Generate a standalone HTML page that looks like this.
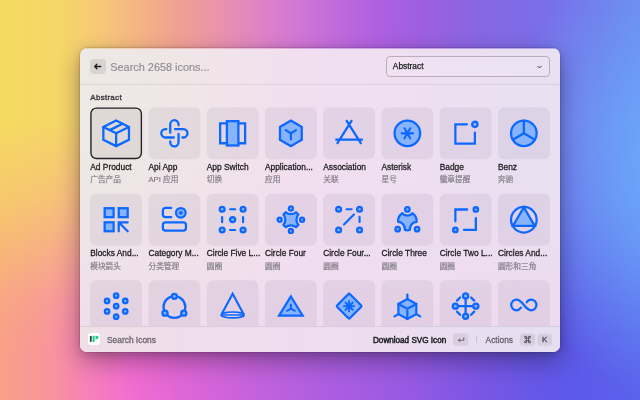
<!DOCTYPE html>
<html lang="en">
<head>
<meta charset="utf-8">
<title>Search Icons</title>
<style>
*{box-sizing:border-box;margin:0;padding:0}
html,body{width:640px;height:400px;overflow:hidden}
body{position:relative;font-family:"Liberation Sans","Noto Sans CJK SC",sans-serif;background:#b060e0}
.bg,.bg2,.bg3{position:absolute;left:0;top:0;width:640px;height:400px}
.bg{background:linear-gradient(to right,#f9a088 0px,#f8949c 50px,#f680ba 90px,#f26ed0 130px,#e066d6 180px,#c662dc 250px,#ae5ee0 320px,#9a5ae2 400px,#7a56e4 480px,#5e58e8 560px,#5a62ec 640px)}
.bg2{background:linear-gradient(to right,#f5da60 0px,#f5d668 60px,#f6c878 100px,#f5b485 140px,#f0a093 180px,#ea92ad 220px,#df83c6 260px,#d076d6 300px,#bf6adc 340px,#ae60e0 380px,#9e5fe0 420px,#8766e2 480px,#7a6ee8 540px,#7278ea 600px,#6e86ee 640px);-webkit-mask-image:linear-gradient(to bottom,#000 0%,#000 30%,rgba(0,0,0,.7) 50%,rgba(0,0,0,.12) 75%,transparent 88%);mask-image:linear-gradient(to bottom,#000 0%,#000 30%,rgba(0,0,0,.7) 50%,rgba(0,0,0,.12) 75%,transparent 88%)}
.bg3{background:radial-gradient(ellipse 165px 235px at 672px 165px,rgba(106,174,252,1),rgba(106,166,249,.64) 45%,rgba(104,160,248,0) 100%)}
.win{position:absolute;left:80px;top:48px;width:480px;height:303.5px;border-radius:7px;overflow:hidden;will-change:transform;
 background:linear-gradient(to top,rgba(240,216,238,.8) 0%,rgba(240,218,239,.4) 30%,rgba(240,220,240,0) 65%),linear-gradient(to right,#ede9e4 0%,#f0e5e8 25%,#f1dff0 46%,#eddff1 72%,#e8e0f1 100%);
 box-shadow:0 9px 24px rgba(0,0,0,.33),0 2px 10px rgba(0,0,0,.14),0 0 0 .5px rgba(0,0,0,.2)}
.win::before{content:"";position:absolute;z-index:5;left:0;top:0;width:480px;height:1px;opacity:.5;background:linear-gradient(to right,#f6c878 0px,#f5b485 60px,#f0a093 100px,#ea92ad 140px,#df83c6 180px,#d076d6 220px,#bf6adc 260px,#ae60e0 300px,#9e5fe0 340px,#8766e2 400px,#7a6ee8 480px)}
.hdr{position:absolute;left:0;top:0;width:480px;height:36.5px;border-bottom:1px solid rgba(0,0,0,.065)}
.back{position:absolute;left:10.2px;top:11px;width:15.4px;height:15.4px;border-radius:4px;background:rgba(0,0,0,.09)}
.back svg{position:absolute;left:3.2px;top:3.2px}
.ph{position:absolute;left:30.3px;top:11.5px;font-size:10.9px;line-height:14px;color:#918b94;-webkit-text-stroke:.15px #918b94;white-space:nowrap}
.dd{position:absolute;left:306px;top:8px;width:164px;height:21px;border:1px solid rgba(60,30,40,.28);border-radius:4.5px;background:rgba(255,255,255,.12)}
.dd span{position:absolute;left:5.8px;top:4.3px;font-size:8.4px;line-height:11px;color:#1d1b1f;-webkit-text-stroke:.25px #1d1b1f;white-space:nowrap}
.dd svg{position:absolute;right:7.5px;top:7.9px}
.sec{position:absolute;left:10.3px;top:44.3px;font-size:8px;line-height:11px;color:#453f47;-webkit-text-stroke:.4px #453f47;letter-spacing:.28px;white-space:nowrap}
.tbg{position:absolute;left:0;top:0}
.tile{position:absolute;width:51.84px;height:51.84px;display:flex;align-items:center;justify-content:center}
.tt{position:absolute;font-size:8.4px;line-height:11px;color:#1d1b1f;-webkit-text-stroke:.26px #1d1b1f;white-space:nowrap}
.st{position:absolute;font-size:7.7px;line-height:11px;color:#837d86;-webkit-text-stroke:.2px #837d86;white-space:nowrap}
.ftr{position:absolute;left:0;top:278px;width:480px;height:25.5px;box-shadow:inset 0 1px 0 rgba(0,0,0,.08);background:linear-gradient(to right,#efe0e6 0%,#f0dcec 25%,#eedcf0 56%,#e6dff2 100%)}
.logo{position:absolute;left:8.2px;top:7.2px;width:12px;height:12px;border-radius:3px;background:#fff}
.logo svg{position:absolute;left:0;top:0}
.ft{position:absolute;top:8.5px;font-size:8.4px;line-height:11px;white-space:nowrap}
.ft.g{color:#69646d;-webkit-text-stroke:.28px #69646d}
.ft.b{color:#1d1b1f;-webkit-text-stroke:.45px #1d1b1f;font-size:8.15px}
.key{position:absolute;top:7.5px;height:12.3px;color:#4a454e;font-size:8px;line-height:12.6px;text-align:center;-webkit-text-stroke:.3px #4a454e}
.key.cmd{font-size:6.6px;line-height:12.3px;-webkit-text-stroke:.4px #4a454e}
.vsep{position:absolute;left:396px;top:10px;width:1px;height:7px;background:rgba(0,0,0,.13)}
</style>
</head>
<body>
<div class="bg"></div><div class="bg2"></div><div class="bg3"></div>
<div class="win">
 <div class="hdr">
  <div class="back"><svg width="9" height="9" viewBox="0 0 16 16" fill="none" stroke="#1d1b1f" stroke-width="2.4" stroke-linecap="round" stroke-linejoin="round"><path d="M13.8 8H3M6.9 4.1L3 8L6.9 11.9"/></svg></div>
  <div class="ph">Search 2658 icons...</div>
  <div class="dd"><span>Abstract</span><svg width="5" height="4.2" viewBox="0 0 12 10" fill="none" stroke="#2a272d" stroke-width="2.2" stroke-linecap="round" stroke-linejoin="round"><path d="M2 3L6 7L10 3"/></svg></div>
 </div>
 <div class="sec">Abstract</div>
<svg class="tbg" width="480" height="304" viewBox="0 0 480 304" fill="rgba(40,20,60,.058)"><rect x="10.24" y="59.41" width="51.84" height="51.84" rx="6" fill="rgba(40,30,30,.07)"/><rect x="10.94" y="60.11" width="50.44" height="50.44" rx="5.5" fill="none" stroke="#26222a" stroke-width="1.4"/><g transform="translate(20.80 69.97) scale(0.6400)" fill="none" stroke="#0d68ff" stroke-width="3.55" stroke-linecap="round" stroke-linejoin="miter"><path d="M44 14L24 4L4 14V34L24 44L44 34V14Z"/><path d="M4 14L24 24L44 14M24 44V24M34 9L14 19"/></g><rect x="68.48" y="59.41" width="51.84" height="51.84" rx="6"/><g transform="translate(79.04 69.97) scale(0.6400)" fill="none" stroke="#0d68ff" stroke-width="3.55" stroke-linecap="round" stroke-linejoin="miter"><path d="M17.5 23V10A6.5 6.5 0 0 1 30.5 10V11.5M25 17.5H38A6.5 6.5 0 0 1 38 30.5H36.5M30.5 25V38A6.5 6.5 0 0 1 17.5 38V36.5M23 30.5H10A6.5 6.5 0 0 1 10 17.5H11.5"/></g><rect x="126.72" y="59.41" width="51.84" height="51.84" rx="6"/><g transform="translate(137.28 69.97) scale(0.6400)" fill="none" stroke="#0d68ff" stroke-width="3.55" stroke-linecap="round" stroke-linejoin="miter"><path d="M15 8.5H4.5V39.5H15M33 8.5H43.5V39.5H33"/><rect x="15" y="5" width="18" height="38" fill="#88b4ff"/></g><rect x="184.96" y="59.41" width="51.84" height="51.84" rx="6"/><g transform="translate(195.52 69.97) scale(0.6400)" fill="none" stroke="#0d68ff" stroke-width="3.55" stroke-linecap="round" stroke-linejoin="miter"><path d="M41 14L24 4L7 14V34L24 44L41 34V14Z" fill="#88b4ff"/><path d="M16 19L24 24L32 19M24 24V33.5"/></g><rect x="243.20" y="59.41" width="51.84" height="51.84" rx="6"/><g transform="translate(253.76 69.97) scale(0.6400)" fill="none" stroke="#0d68ff" stroke-width="3.55" stroke-linecap="round" stroke-linejoin="miter"><g stroke-linecap="butt"><path d="M28.5 3.5L5 40.5M19.5 3.5L43 40.5M2.5 34H45.5"/></g></g><rect x="301.44" y="59.41" width="51.84" height="51.84" rx="6"/><g transform="translate(312.00 69.97) scale(0.6400)" fill="none" stroke="#0d68ff" stroke-width="3.55" stroke-linecap="round" stroke-linejoin="miter"><circle cx="24" cy="24" r="20" fill="#88b4ff"/><path stroke-width="3.3" d="M15 24H33M19.5 16.2L28.5 31.8M28.5 16.2L19.5 31.8"/></g><rect x="359.68" y="59.41" width="51.84" height="51.84" rx="6"/><g transform="translate(370.24 69.97) scale(0.6400)" fill="none" stroke="#0d68ff" stroke-width="3.55" stroke-linecap="round" stroke-linejoin="miter"><path d="M26 10H8V40H38.5V23"/><circle cx="38.5" cy="10" r="4.2" fill="#88b4ff"/></g><rect x="417.92" y="59.41" width="51.84" height="51.84" rx="6"/><g transform="translate(428.48 69.97) scale(0.6400)" fill="none" stroke="#0d68ff" stroke-width="3.55" stroke-linecap="round" stroke-linejoin="miter"><circle cx="24" cy="24" r="20" fill="#88b4ff"/><path d="M24 4V24L6.7 34M24 24L41.3 34"/></g><rect x="10.24" y="145.81" width="51.84" height="51.84" rx="6"/><g transform="translate(20.80 156.37) scale(0.6400)" fill="none" stroke="#0d68ff" stroke-width="3.55" stroke-linecap="round" stroke-linejoin="miter"><rect x="6" y="6" width="14" height="14" fill="#88b4ff"/><rect x="28" y="6" width="14" height="14" fill="#88b4ff"/><rect x="6" y="28" width="14" height="14" fill="#88b4ff"/><path d="M42 28H28V42M28 28L42 42"/></g><rect x="68.48" y="145.81" width="51.84" height="51.84" rx="6"/><g transform="translate(79.04 156.37) scale(0.6400)" fill="none" stroke="#0d68ff" stroke-width="3.55" stroke-linecap="round" stroke-linejoin="miter"><rect x="6" y="28" width="36" height="13" rx="4"/><path d="M19 5.5H10a4 4 0 0 0-4 4V16a4 4 0 0 0 4 4H19"/><circle cx="34" cy="13.2" r="7.5" fill="#88b4ff"/><circle cx="34" cy="13.2" r="3" fill="#0d68ff" stroke="none"/></g><rect x="126.72" y="145.81" width="51.84" height="51.84" rx="6"/><g transform="translate(137.28 156.37) scale(0.6400)" fill="none" stroke="#0d68ff" stroke-width="3.55" stroke-linecap="round" stroke-linejoin="miter"><circle cx="7.6" cy="7.6" r="3.8" fill="#88b4ff"/><circle cx="40.3" cy="7.6" r="3.8" fill="#88b4ff"/><circle cx="7.6" cy="40" r="3.8" fill="#88b4ff"/><circle cx="40.3" cy="40" r="3.8" fill="#88b4ff"/><circle cx="24" cy="23.8" r="4" fill="#88b4ff"/><path stroke-width="3.4" d="M20 7.6H28M20 40H28M7.6 19.8V27.8M40.3 19.8V27.8"/></g><rect x="184.96" y="145.81" width="51.84" height="51.84" rx="6"/><g transform="translate(195.52 156.37) scale(0.6400)" fill="none" stroke="#0d68ff" stroke-width="3.55" stroke-linecap="round" stroke-linejoin="miter"><circle cx="24" cy="6.5" r="3.2" fill="#88b4ff"/><circle cx="41.5" cy="24" r="3.2" fill="#88b4ff"/><circle cx="24" cy="41.5" r="3.2" fill="#88b4ff"/><circle cx="6.5" cy="24" r="3.2" fill="#88b4ff"/><path stroke-linejoin="round" d="M16 12.3A12 12 0 0 0 32 12.3L35.7 16A12 12 0 0 0 35.7 32L32 35.7A12 12 0 0 0 16 35.7L12.3 32A12 12 0 0 0 12.3 16Z" fill="#88b4ff"/></g><rect x="243.20" y="145.81" width="51.84" height="51.84" rx="6"/><g transform="translate(253.76 156.37) scale(0.6400)" fill="none" stroke="#0d68ff" stroke-width="3.55" stroke-linecap="round" stroke-linejoin="miter"><circle cx="7.6" cy="7.6" r="3.8" fill="#88b4ff"/><circle cx="40.3" cy="7.6" r="3.8" fill="#88b4ff"/><circle cx="7.6" cy="40" r="3.8" fill="#88b4ff"/><circle cx="40.3" cy="40" r="3.8" fill="#88b4ff"/><path stroke-width="3.4" d="M20 7.6H28M40.3 19.5V27.5M31.5 15.8L16 31.3"/></g><rect x="301.44" y="145.81" width="51.84" height="51.84" rx="6"/><g transform="translate(312.00 156.37) scale(0.6400)" fill="none" stroke="#0d68ff" stroke-width="3.55" stroke-linecap="round" stroke-linejoin="miter"><path stroke-linejoin="round" d="M16.17 13.80A9.80 9.80 0 0 0 31.83 13.80A14.50 14.50 0 0 1 38.43 27.42A11.30 11.30 0 0 0 27.87 39.97A14.50 14.50 0 0 1 20.13 39.97A11.30 11.30 0 0 0 9.57 27.42A14.50 14.50 0 0 1 16.17 13.80Z" fill="#88b4ff"/><circle cx="24" cy="7.9" r="3.5" fill="#88b4ff"/><circle cx="39.1" cy="38.7" r="3.5" fill="#88b4ff"/><circle cx="8.9" cy="38.7" r="3.5" fill="#88b4ff"/></g><rect x="359.68" y="145.81" width="51.84" height="51.84" rx="6"/><g transform="translate(370.24 156.37) scale(0.6400)" fill="none" stroke="#0d68ff" stroke-width="3.55" stroke-linecap="round" stroke-linejoin="miter"><path d="M26.5 8H8V26.5M21.5 40H40V21.5"/><circle cx="40" cy="8" r="3.5" fill="#88b4ff"/><circle cx="8" cy="40" r="3.5" fill="#88b4ff"/></g><rect x="417.92" y="145.81" width="51.84" height="51.84" rx="6"/><g transform="translate(428.48 156.37) scale(0.6400)" fill="none" stroke="#0d68ff" stroke-width="3.55" stroke-linecap="round" stroke-linejoin="miter"><circle cx="24" cy="24" r="20"/><path d="M24 4.5L7 33.5H41Z" fill="#88b4ff"/></g><rect x="10.24" y="232.21" width="51.84" height="51.84" rx="6"/><g transform="translate(20.80 242.77) scale(0.6400)" fill="none" stroke="#0d68ff" stroke-width="3.55" stroke-linecap="round" stroke-linejoin="miter"><circle cx="24.00" cy="7.60" r="3.5" fill="#88b4ff"/><circle cx="38.20" cy="15.80" r="3.5" fill="#88b4ff"/><circle cx="38.20" cy="32.20" r="3.5" fill="#88b4ff"/><circle cx="24.00" cy="40.40" r="3.5" fill="#88b4ff"/><circle cx="9.80" cy="32.20" r="3.5" fill="#88b4ff"/><circle cx="9.80" cy="15.80" r="3.5" fill="#88b4ff"/><circle cx="24.00" cy="24.00" r="3.5" fill="#88b4ff"/></g><rect x="68.48" y="232.21" width="51.84" height="51.84" rx="6"/><g transform="translate(79.04 242.77) scale(0.6400)" fill="none" stroke="#0d68ff" stroke-width="3.55" stroke-linecap="round" stroke-linejoin="miter"><circle cx="24" cy="25.5" r="17"/><circle cx="24" cy="8.7" r="4" fill="#88b4ff"/><circle cx="9.3" cy="35" r="4" fill="#88b4ff"/><circle cx="38.7" cy="35" r="4" fill="#88b4ff"/></g><rect x="126.72" y="232.21" width="51.84" height="51.84" rx="6"/><g transform="translate(137.28 242.77) scale(0.6400)" fill="none" stroke="#0d68ff" stroke-width="3.55" stroke-linecap="round" stroke-linejoin="miter"><ellipse cx="24" cy="37.75" rx="18" ry="4.6" stroke-width="2.6"/><path stroke-width="3.3" stroke-linecap="butt" d="M6.6 37.2L24 4.8L41.4 37.2"/><path stroke-width="2.4" stroke-linecap="butt" d="M6 37.75H42"/></g><rect x="184.96" y="232.21" width="51.84" height="51.84" rx="6"/><g transform="translate(195.52 242.77) scale(0.6400)" fill="none" stroke="#0d68ff" stroke-width="3.55" stroke-linecap="round" stroke-linejoin="miter"><path d="M24 9L42.4 39H5.6Z" fill="#88b4ff"/><path stroke-width="3.2" d="M24 21.5V28L18 31.3M24 28L30.2 31.3"/></g><rect x="243.20" y="232.21" width="51.84" height="51.84" rx="6"/><g transform="translate(253.76 242.77) scale(0.6400)" fill="none" stroke="#0d68ff" stroke-width="3.55" stroke-linecap="round" stroke-linejoin="miter"><path d="M22.6 5.4a2 2 0 0 1 2.8 0L42.6 22.6a2 2 0 0 1 0 2.8L25.4 42.6a2 2 0 0 1-2.8 0L5.4 25.4a2 2 0 0 1 0-2.8Z" fill="#88b4ff"/><path stroke-width="3" d="M16 24H32M24 16V32M18.3 18.3L29.7 29.7M29.7 18.3L18.3 29.7"/></g><rect x="301.44" y="232.21" width="51.84" height="51.84" rx="6"/><g transform="translate(312.00 242.77) scale(0.6400)" fill="none" stroke="#0d68ff" stroke-width="3.55" stroke-linecap="round" stroke-linejoin="miter"><path d="M38 20.5L24 13L10 20.5V36.5L24 44L38 36.5V20.5Z" fill="#88b4ff"/><path d="M10 20.5L24 28L38 20.5M24 28V44M24 6V13M10 36.5L4 40M38 36.5L44 40"/></g><rect x="359.68" y="232.21" width="51.84" height="51.84" rx="6"/><g transform="translate(370.24 242.77) scale(0.6400)" fill="none" stroke="#0d68ff" stroke-width="3.55" stroke-linecap="round" stroke-linejoin="miter"><path d="M24 12V36M12 24H36M10.6 15.4L15.4 10.6M32.6 10.6L37.4 15.4M37.4 32.6L32.6 37.4M15.4 37.4L10.6 32.6"/><circle cx="24" cy="8" r="4" fill="#88b4ff"/><circle cx="40" cy="24" r="4" fill="#88b4ff"/><circle cx="24" cy="40" r="4" fill="#88b4ff"/><circle cx="8" cy="24" r="4" fill="#88b4ff"/></g><rect x="417.92" y="232.21" width="51.84" height="51.84" rx="6"/><g transform="translate(428.48 242.77) scale(0.6400)" fill="none" stroke="#0d68ff" stroke-width="3.55" stroke-linecap="round" stroke-linejoin="miter"><path stroke-width="3.5" d="M19.5 26.5C17.8 29 15.5 30.5 12.5 30.5C8 30.5 4.3 26.8 4.3 22.3C4.3 17.8 8 14 12.5 14C17 14 20 17 24 22.3C28 27.5 31 30.5 35.5 30.5C40 30.5 43.7 26.8 43.7 22.3C43.7 17.8 40 14 35.5 14C32.5 14 30 15.5 28.5 18"/></g></svg>
<div class="tt" style="left:10.24px;top:113.82px">Ad Product</div>
<div class="st" style="left:10.24px;top:126.22px">广告产品</div>
<div class="tt" style="left:68.48px;top:113.82px">Api App</div>
<div class="st" style="left:68.48px;top:126.22px">API 应用</div>
<div class="tt" style="left:126.72px;top:113.82px">App Switch</div>
<div class="st" style="left:126.72px;top:126.22px">切换</div>
<div class="tt" style="left:184.96px;top:113.82px">Application...</div>
<div class="st" style="left:184.96px;top:126.22px">应用</div>
<div class="tt" style="left:243.20px;top:113.82px">Association</div>
<div class="st" style="left:243.20px;top:126.22px">关联</div>
<div class="tt" style="left:301.44px;top:113.82px">Asterisk</div>
<div class="st" style="left:301.44px;top:126.22px">星号</div>
<div class="tt" style="left:359.68px;top:113.82px">Badge</div>
<div class="st" style="left:359.68px;top:126.22px">徽章提醒</div>
<div class="tt" style="left:417.92px;top:113.82px">Benz</div>
<div class="st" style="left:417.92px;top:126.22px">奔驰</div>
<div class="tt" style="left:10.24px;top:200.47px">Blocks And...</div>
<div class="st" style="left:10.24px;top:212.87px">模块箭头</div>
<div class="tt" style="left:68.48px;top:200.47px">Category M...</div>
<div class="st" style="left:68.48px;top:212.87px">分类管理</div>
<div class="tt" style="left:126.72px;top:200.47px">Circle Five L...</div>
<div class="st" style="left:126.72px;top:212.87px">圆圈</div>
<div class="tt" style="left:184.96px;top:200.47px">Circle Four</div>
<div class="st" style="left:184.96px;top:212.87px">圆圈</div>
<div class="tt" style="left:243.20px;top:200.47px">Circle Four...</div>
<div class="st" style="left:243.20px;top:212.87px">圆圈</div>
<div class="tt" style="left:301.44px;top:200.47px">Circle Three</div>
<div class="st" style="left:301.44px;top:212.87px">圆圈</div>
<div class="tt" style="left:359.68px;top:200.47px">Circle Two L...</div>
<div class="st" style="left:359.68px;top:212.87px">圆圈</div>
<div class="tt" style="left:417.92px;top:200.47px">Circles And...</div>
<div class="st" style="left:417.92px;top:212.87px">圆形和三角</div>
 <div class="ftr">
  <svg class="tbg" width="480" height="26" viewBox="0 0 480 26" fill="rgba(0,0,0,.07)"><rect x="373" y="7.5" width="15.4" height="12.2" rx="3"/><rect x="440" y="7.5" width="15.3" height="12.2" rx="3"/><rect x="457.3" y="7.5" width="14.7" height="12.2" rx="3"/></svg>
  <div class="logo"><svg width="12" height="12" viewBox="0 0 24 24"><path d="M3.8 6.4L7.4 5.6V17L3.8 18.2Z" fill="#33383f"/><path d="M9.2 6.1L13.4 5.5V17.4L9.2 19Z" fill="#1fd18b"/><path d="M15 6.1L20.6 5.5V11L15 13.3Z" fill="#1fd18b"/></svg></div>
  <div class="ft g" style="left:27px">Search Icons</div>
  <div class="ft b" style="left:293px">Download SVG Icon</div>
  <div class="key" style="left:373px;width:15.4px"><svg width="8" height="7" viewBox="0 0 16 14" fill="none" stroke="#5f5a63" stroke-width="1.8" stroke-linecap="round" stroke-linejoin="round" style="position:absolute;left:3.7px;top:2.8px"><path d="M13.5 3.5V8.5H3M6 5.5L3 8.5L6 11.5"/></svg></div>
  <div class="vsep"></div>
  <div class="ft g" style="left:405.6px">Actions</div>
  <div class="key cmd" style="left:440px;width:15.3px">⌘</div>
  <div class="key" style="left:457.3px;width:14.7px">K</div>
 </div>
</div>
</body>
</html>
